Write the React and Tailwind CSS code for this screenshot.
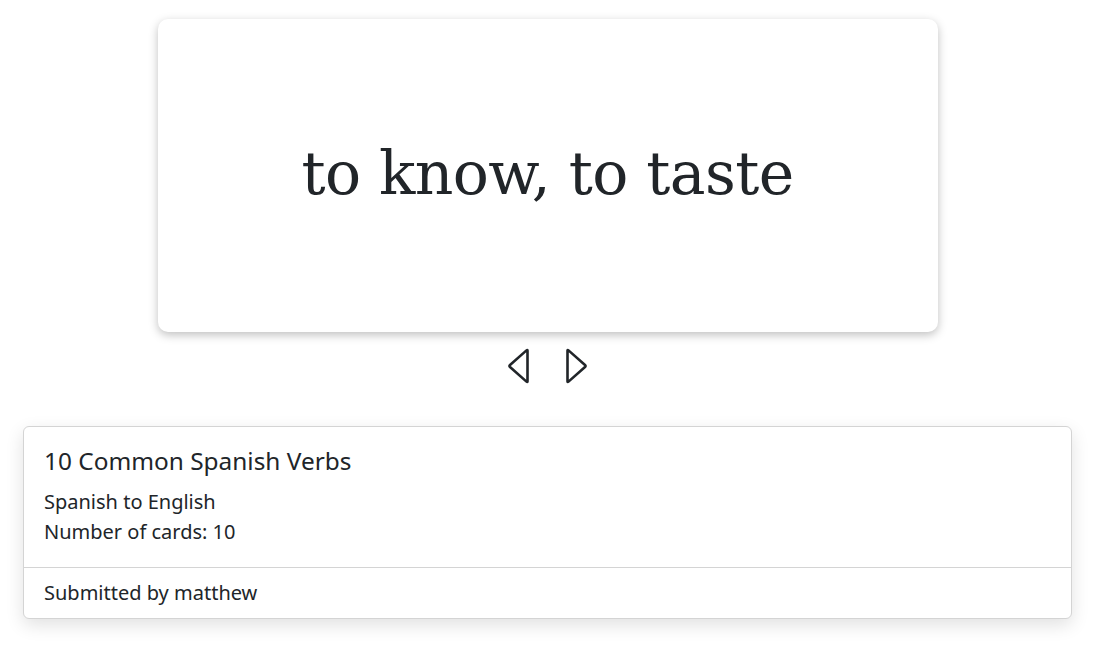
export default function App() {
  return (
    <div className="w-[1095px] min-h-[647px] bg-white text-[#212529] font-['Noto_Sans',sans-serif]">
      <div className="pt-[19px] flex flex-col items-center">
        <FlashCard text="to know, to taste" />
        <div className="mt-[17px] flex items-center gap-[31px] h-[34px]">
          <button className="text-[#212529]" title="Anterior">
            <IconLeft />
          </button>
          <button className="text-[#212529]" title="Siguiente">
            <IconRight />
          </button>
        </div>
      </div>
      <div className="px-[23px] mt-[43px]">
        <DeckInfo />
      </div>
    </div>
  );
}

function FlashCard({ text }) {
  return (
    <div className="w-[780px] h-[313px] rounded-[10px] bg-white shadow-[0_3px_10px_rgba(0,0,0,0.25)] flex items-center justify-center">
      <span className="font-['DejaVu_Serif',serif] text-[60px] leading-none tracking-[-0.6px] -mt-[6px]">{text}</span>
    </div>
  );
}

function DeckInfo() {
  return (
    <div className="rounded-[6px] border border-[#d4d4d4] bg-white shadow-[0_6px_18px_rgba(0,0,0,0.12)]">
      <div className="px-[20px] pt-[20px] pb-[20px]">
        <h5 className="text-[24.4px] leading-[28px] mb-[12px]">10 Common Spanish Verbs</h5>
        <p className="text-[20px] leading-[30px]">Spanish to English</p>
        <p className="text-[20px] leading-[30px]">Number of cards: 10</p>
      </div>
      <div className="border-t border-[#d4d4d4] px-[20px] py-[12px] text-[20px] leading-[26px]">
        Submitted by matthew
      </div>
    </div>
  );
}

function IconLeft() {
  return (
    <svg width="26" height="36" viewBox="0 0 26 36" fill="none" stroke="currentColor" strokeWidth="2.6" strokeLinecap="round" strokeLinejoin="round">
      <path d="M21.5 2.5 L21.5 33.5 Q21.5 34.5 20.5 33.6 L4 19 Q3 18 4 17 L20.5 2.4 Q21.5 1.5 21.5 2.5 Z" />
    </svg>
  );
}

function IconRight() {
  return (
    <svg width="26" height="36" viewBox="0 0 26 36" fill="none" stroke="currentColor" strokeWidth="2.6" strokeLinecap="round" strokeLinejoin="round">
      <path d="M4.5 2.5 L4.5 33.5 Q4.5 34.5 5.5 33.6 L22 19 Q23 18 22 17 L5.5 2.4 Q4.5 1.5 4.5 2.5 Z" />
    </svg>
  );
}
